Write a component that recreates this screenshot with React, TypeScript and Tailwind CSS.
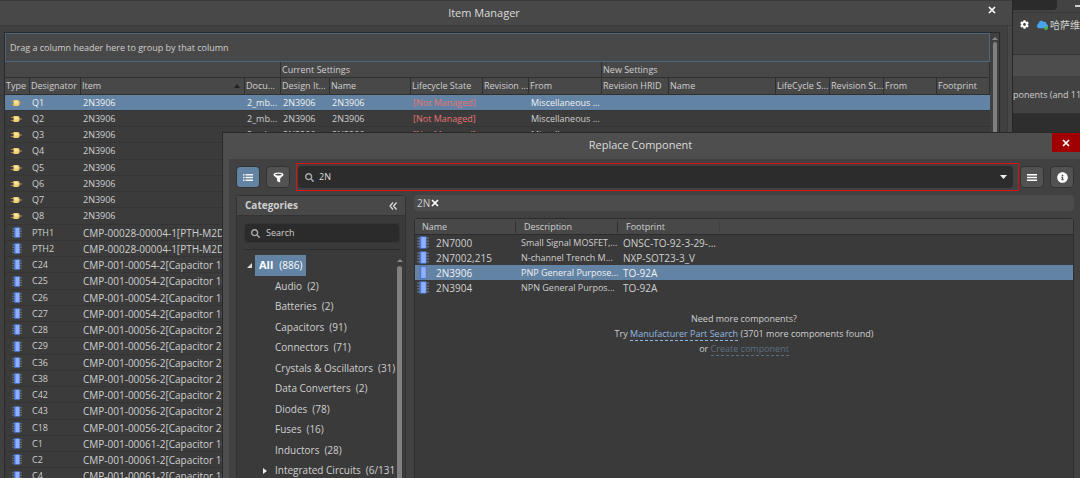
import React from "react";
import { FaCloud, FaCog, FaInfoCircle, FaSearch } from "react-icons/fa";

type Part = {
  designator: string;
  item: string;
  kind: "gate" | "chip";
};

const transistor = (designator: string): Part => ({ designator, item: "2N3906", kind: "gate" });
const chip = (designator: string, item: string): Part => ({ designator, item, kind: "chip" });

const parts: Part[] = [
  ...["Q1", "Q2", "Q3", "Q4", "Q5", "Q6", "Q7", "Q8"].map(transistor),
  chip("PTH1", "CMP-00028-00004-1[PTH-M2DS"),
  chip("PTH2", "CMP-00028-00004-1[PTH-M2DS"),
  ...["C24", "C25", "C26", "C27"].map((d) => chip(d, "CMP-001-00054-2[Capacitor 100")),
  ...["C28", "C29", "C36", "C38", "C42", "C43", "C18"].map((d) =>
    chip(d, "CMP-001-00056-2[Capacitor 2,2")
  ),
  ...["C1", "C2", "C4"].map((d) => chip(d, "CMP-001-00061-2[Capacitor 100")),
];

const columns = [
  { label: "Type", width: "w-[25px]" },
  { label: "Designator", width: "w-[51px]" },
  { label: "Item", width: "w-[164px]", sorted: true },
  { label: "Docu...", width: "w-[36px]" },
  { label: "Design It...", width: "w-[49px]" },
  { label: "Name", width: "w-[81px]" },
  { label: "Lifecycle State", width: "w-[72px]" },
  { label: "Revision ...", width: "w-[46px]" },
  { label: "From", width: "w-[73px]" },
  { label: "Revision HRID", width: "w-[67px]" },
  { label: "Name", width: "w-[107px]" },
  { label: "LifeCycle S...", width: "w-[54px]" },
  { label: "Revision St...", width: "w-[54px]" },
  { label: "From", width: "w-[53px]" },
  { label: "Footprint", width: "w-auto" },
];

const categories = [
  { name: "Audio", count: "(2)" },
  { name: "Batteries", count: "(2)" },
  { name: "Capacitors", count: "(91)" },
  { name: "Connectors", count: "(71)" },
  { name: "Crystals & Oscillators", count: "(31)" },
  { name: "Data Converters", count: "(2)" },
  { name: "Diodes", count: "(78)" },
  { name: "Fuses", count: "(16)" },
  { name: "Inductors", count: "(28)" },
  { name: "Integrated Circuits", count: "(6/131", expandable: true },
];

const results = [
  { name: "2N7000", description: "Small Signal MOSFET,...", footprint: "ONSC-TO-92-3-29-..." },
  { name: "2N7002,215", description: "N-channel Trench M...", footprint: "NXP-SOT23-3_V" },
  { name: "2N3906", description: "PNP General Purpose...", footprint: "TO-92A", selected: true },
  { name: "2N3904", description: "NPN General Purpos...", footprint: "TO-92A" },
];

function CrossIcon() {
  return (
    <svg viewBox="0 0 8 8" className="h-2 w-2" aria-hidden="true">
      <path d="M1 1l6 6M7 1L1 7" stroke="#fff" strokeWidth="1.700" />
    </svg>
  );
}

function GateIcon() {
  return (
    <svg viewBox="0 0 11 8" className="block h-2 w-[11px]" aria-hidden="true">
      <path d="M0 2.500h3M0 5.500h3M8 4h3" stroke="#a88d55" strokeWidth="1" />
      <path d="M2.500 1H7l1.500 1.200v3.600L7 7H2.500z" fill="#f0cf72" />
      <path d="M3.500 2h3v2.500h-3z" fill="#ffe9a0" />
    </svg>
  );
}

function ChipIcon({ large = false }: { large?: boolean }) {
  return (
    <svg
      viewBox="0 0 12 12"
      preserveAspectRatio="none"
      className={large ? "block h-[13px] w-3" : "block h-[11px] w-2.5"}
      aria-hidden="true"
    >
      <path d="M0 2h12M0 4.700h12M0 7.300h12M0 10h12" stroke="#7f838c" strokeWidth=".9" />
      <rect x="2.500" y=".3" width="7" height="11.400" fill="#4a78d8" />
      <rect x="4.200" y="1" width="4.600" height="10" fill="#8fb0ff" />
    </svg>
  );
}

function ItemManager() {
  return (
    <section className="flex min-w-0 flex-1 flex-col border-r border-[#262626] bg-[#484848]">
      <header className="flex h-[26px] shrink-0 items-center border-t border-b border-[#3a3a3a]">
        <h1 className="flex-1 pr-[18px] text-center text-[11px] text-[#dcdcdc]">Item Manager</h1>
        <button aria-label="Close Item Manager" className="mr-3.5 mb-1.5 flex h-3 w-3 items-center justify-center">
          <CrossIcon />
        </button>
      </header>
      <div className="mr-1 flex min-h-0 flex-1 border-r border-[#3a3a3a] bg-[#404040] pt-1.5 pr-[7px] pl-1">
        <div className="flex min-w-0 flex-1 overflow-hidden border-t border-r border-l border-[#2a2a2a]">
          <div className="min-w-0 flex-1">
            <div className="flex h-[29px] items-center border border-[#4f677e] bg-[#484848] pl-1 text-[9px]">
              Drag a column header here to group by that column
            </div>
            <table className="w-full table-fixed border-separate border-spacing-0 text-left">
              <colgroup>
                {columns.map((c, i) => (
                  <col key={i} className={c.width} />
                ))}
              </colgroup>
              <thead className="bg-[#484848] text-[9px] whitespace-nowrap [&_th]:border-r [&_th]:border-b [&_th]:border-[#303030] [&_th]:py-0 [&_th]:pr-0 [&_th]:font-normal">
                <tr className="h-4">
                  <th colSpan={4} />
                  <th colSpan={5} className="pl-px">Current Settings</th>
                  <th colSpan={6} className="pl-px">New Settings</th>
                </tr>
                <tr className="h-[17px]">
                  {columns.map((c, i) => (
                    <th key={i} className="pl-px">
                      <div className="flex items-center justify-between">
                        {c.label}
                        {c.sorted && (
                          <svg viewBox="0 0 6 4" className="mr-1 h-1 w-1.5" aria-label="Sorted ascending">
                            <path d="M0 4l3-4 3 4z" fill="#222" />
                          </svg>
                        )}
                      </div>
                    </th>
                  ))}
                </tr>
              </thead>
              <tbody className="bg-[#3b3b3b] text-[9px] leading-3 whitespace-nowrap [&_td]:border-b [&_td]:border-[#353535] [&_td]:py-0 [&_td]:pr-0 [&_td]:pl-0.5 [&>tr]:h-4 [&>tr:nth-child(4n)]:h-[17px]">
                {parts.map((p, i) => (
                  <tr key={p.designator} className={i === 0 ? "bg-[#6283a3] text-[#f0f0f0]" : ""}>
                    <td>
                      <div className="flex justify-center pr-1">{p.kind === "gate" ? <GateIcon /> : <ChipIcon />}</div>
                    </td>
                    <td>{p.designator}</td>
                    <td className={p.kind === "chip" ? "text-[10px]" : ""}>{p.item}</td>
                    <td>{i < 3 ? "2_mb..." : ""}</td>
                    <td>{i < 3 ? "2N3906" : ""}</td>
                    <td>{i < 3 ? "2N3906" : ""}</td>
                    <td className="text-[#e87474]">{i < 3 ? "[Not Managed]" : ""}</td>
                    <td />
                    <td>{i < 3 ? "Miscellaneous ..." : ""}</td>
                    <td colSpan={6} />
                  </tr>
                ))}
              </tbody>
            </table>
          </div>
          <div className="flex w-[9px] shrink-0 flex-col items-center gap-0.5 bg-[#404040] pt-1">
            <svg viewBox="0 0 6 3" className="h-[3px] w-1.5" aria-hidden="true">
              <path d="M0 3l3-3 3 3z" fill="#888" />
            </svg>
            <div className="w-1 flex-1 rounded-t bg-[#808080]" />
          </div>
        </div>
      </div>
    </section>
  );
}

function AppStrip() {
  return (
    <aside className="flex w-[67px] shrink-0 flex-col overflow-hidden bg-[#2e2e2e] whitespace-nowrap">
      <div className="flex h-[13px] justify-between border-b border-[#383838] bg-[#434343]">
        <div className="h-2.5 w-11 rounded-br-sm bg-[#2b2b2b]" />
        <div className="mt-[5px] h-0.5 w-[5px] bg-[#cfcfcf]" />
      </div>
      <div className="flex h-[42px] items-start border-b border-[#353535] bg-[#424242] pt-1 pl-[7px]">
        <button aria-label="Settings" className="mt-[3px] text-[9px] text-white">
          <FaCog />
        </button>
        <div className="mt-0.5 ml-[5px] h-3 w-px bg-[#2d2d2d]" />
        <div className="relative mt-0.5 ml-[3px] text-[11px] text-[#4aa3f0]">
          <FaCloud />
          <span className="absolute right-0 bottom-0 h-1 w-1 rounded-full bg-[#4caf50]" />
        </div>
        <span className="ml-0.5 text-[10px] leading-4">哈萨维</span>
      </div>
      <div className="h-[21px] bg-[#4d4d4d]" />
      <div className="flex h-[38px] items-center border-b border-[#333] bg-[#424242] text-[9px]">ponents (and 11</div>
    </aside>
  );
}

const toolButton =
  "flex h-[22px] w-6 shrink-0 items-center justify-center rounded-sm border border-[#333] text-white";

function Categories() {
  return (
    <section className="flex w-[170px] shrink-0 flex-col rounded-t border-t border-r border-l border-[#333] bg-[#3a3a3a]">
      <header className="flex h-5 shrink-0 items-center justify-between border-b border-[#333] bg-[#484848] pr-2 pl-2">
        <h2 className="text-[10px] font-bold">Categories</h2>
        <button aria-label="Collapse categories">
          <svg viewBox="0 0 8 8" className="h-2 w-2" fill="none" stroke="#e0e0e0" strokeWidth="1.200">
            <path d="M4 .5L1 4l3 3.500M7.500 .5l-3 3.500 3 3.500" />
          </svg>
        </button>
      </header>
      <label className="mt-[7px] mr-[5px] ml-[7px] flex h-5 shrink-0 items-center gap-1.5 rounded-sm border border-[#343434] bg-[#2b2b2b] pl-1.5">
        <FaSearch className="h-[9px] w-[9px] shrink-0 text-[#aaa]" />
        <input
          aria-label="Search categories"
          placeholder="Search"
          className="w-full min-w-0 bg-transparent text-[9px] outline-none placeholder:text-[#d0d0d0]"
        />
      </label>
      <hr className="mt-1.5 mr-[5px] ml-[7px] shrink-0 border-[#2d2d2d]" />
      <div className="mt-[5px] flex min-h-0 flex-1 overflow-hidden">
        <ul className="min-w-0 flex-1 text-[10px] whitespace-nowrap [&>li]:flex [&>li]:h-5 [&>li]:items-center [&>li:nth-child(odd)]:h-[21px]">
          <li className="pl-2.5">
            <svg viewBox="0 0 5 5" className="h-[5px] w-[5px]" aria-hidden="true">
              <path d="M5 0v5H0z" fill="#ddd" />
            </svg>
            <button className="ml-[3px] flex h-full items-center gap-1.5 bg-[#6283a3] px-1 text-white">
              <b className="text-[11px]">All</b>
              <span>(886)</span>
            </button>
          </li>
          {categories.map((c) => (
            <li key={c.name} className="pl-[26px]">
              <span className="w-3 shrink-0">
                {c.expandable && (
                  <svg viewBox="0 0 4 6" className="h-1.5 w-1" aria-hidden="true">
                    <path d="M0 0l4 3-4 3z" fill="#eee" />
                  </svg>
                )}
              </span>
              <span>{c.name}</span>
              <span className="ml-[5px]">{c.count}</span>
            </li>
          ))}
        </ul>
        <div className="flex w-2 shrink-0 flex-col items-start gap-1 pt-1">
          <svg viewBox="0 0 6 3" className="h-[3px] w-1.5" aria-hidden="true">
            <path d="M0 3l3-3 3 3z" fill="#888" />
          </svg>
          <div className="w-[5px] flex-1 rounded-t bg-[#808080]" />
        </div>
      </div>
    </section>
  );
}

function Results() {
  return (
    <section className="flex min-w-0 flex-1 flex-col">
      <div className="flex h-4 shrink-0 items-center rounded bg-[#4c4c4c] pl-[3px] text-[10px]">
        2N
        <button aria-label="Remove filter 2N" className="ml-px">
          <CrossIcon />
        </button>
      </div>
      <div className="mt-[7px] flex-1 rounded-t border-t border-r border-l border-[#2d2d2d] bg-[#3a3a3a]">
        <table className="w-full table-fixed border-separate border-spacing-0 text-left text-[9px] leading-3 whitespace-nowrap">
          <colgroup>
            <col className="w-[101px]" />
            <col className="w-[102px]" />
            <col className="w-[102px]" />
            <col />
          </colgroup>
          <thead className="bg-[#484848] [&_th]:border-b [&_th]:border-[#2d2d2d] [&_th]:p-0 [&_th]:font-normal">
            <tr className="h-4">
              <th><div className="border-r border-[#303030] pl-[7px]">Name</div></th>
              <th><div className="border-r border-[#303030] pl-2">Description</div></th>
              <th><div className="border-r border-[#414141] pl-2">Footprint</div></th>
              <th aria-label="Spare" />
            </tr>
          </thead>
          <tbody className="[&_td]:p-0">
            {results.map((r) => (
              <tr key={r.name} className={r.selected ? "h-[15px] bg-[#6283a3] text-[#f0f0f0]" : "h-[15px]"}>
                <td>
                  <div className="flex items-center gap-[7px] pl-0.5 text-[10px]">
                    <ChipIcon large />
                    {r.name}
                  </div>
                </td>
                <td><div className="pl-[5px]">{r.description}</div></td>
                <td><div className="pl-[5px] text-[10px]">{r.footprint}</div></td>
                <td />
              </tr>
            ))}
          </tbody>
        </table>
        <div className="mt-4 text-center text-[9px] leading-[15px]">
          <p>Need more components?</p>
          <p>
            Try{" "}
            <a href="#search" className="border-b border-dashed border-[#8fb8e0] text-[#8fb8e0]">Manufacturer Part Search</a>{" "}
            (3701 more components found)
          </p>
          <p>
            or <a href="#create" className="border-b border-dashed border-[#5d6f80] text-[#5d6f80]">Create component</a>
          </p>
        </div>
      </div>
    </section>
  );
}

function ReplaceDialog() {
  return (
    <div
      role="dialog"
      aria-label="Replace Component"
      className="absolute top-[132px] right-0 bottom-0 left-[222px] flex flex-col border-t border-l border-[#292929] bg-[#4e4e4e]"
    >
      <header className="flex h-[26px] shrink-0 items-start">
        <h2 className="flex-1 self-center pb-0.5 pl-1.5 text-center text-[11px] text-[#dcdcdc]">Replace Component</h2>
        <button aria-label="Close" className="flex h-[19px] w-7 items-center justify-center bg-[#a00000]">
          <CrossIcon />
        </button>
      </header>
      <div className="ml-1.5 flex min-h-0 flex-1 flex-col bg-[#414141] pt-1 pr-1.5 pl-[7px]">
        <div className="flex shrink-0 items-center">
          <button aria-label="List view" className={`${toolButton} bg-[#6283a3]`}>
            <svg viewBox="0 0 10 7" className="h-[7px] w-2.5" fill="#f4f4f4">
              <path d="M0 0h1.500v1.500H0zM2.500 0H10v1.500H2.500zM0 2.750h1.500v1.500H0zM2.500 2.750H10v1.500H2.500zM0 5.500h1.500V7H0zM2.500 5.500H10V7H2.500z" />
            </svg>
          </button>
          <button aria-label="Filter" className={`${toolButton} ml-1.5 bg-[#525252]`}>
            <svg viewBox="0 0 12 12" className="h-[11px] w-[11px]" fill="#fff">
              <path fillRule="evenodd" d="M.5 3C.5 1.200 3 .5 6 .5s5.500 .7 5.500 2.500c0 1-2 2-3.700 4v4.500L4.500 10V7C2.500 5 .5 4 .5 3zM2.200 2.800C3 4.200 9 4.200 9.800 2.800 9 1.600 3 1.600 2.200 2.800z" />
            </svg>
          </button>
          <div className="ml-1.5 flex min-w-0 flex-1 border border-[#e00f0f] py-0.5 pr-[5px] pl-px">
            <label className="flex h-[22px] min-w-0 flex-1 items-center gap-[5px] rounded-sm bg-[#2c2c2c] pr-1.5 pl-[7px]">
              <FaSearch className="h-[9px] w-[9px] shrink-0 text-[#aaa]" />
              <input
                aria-label="Search components"
                defaultValue="2N"
                className="w-full min-w-0 bg-transparent text-[9px] text-[#dcdcdc] outline-none"
              />
              <svg viewBox="0 0 7 4" className="h-1 w-[7px] shrink-0" aria-hidden="true">
                <path d="M0 0h7L3.500 4z" fill="#eee" />
              </svg>
            </label>
          </div>
          <button aria-label="Menu" className={`${toolButton} ml-px bg-[#525252]`}>
            <svg viewBox="0 0 10 7" className="h-[7px] w-2.5" fill="#fff">
              <path d="M0 0h10v1.600H0zM0 2.700h10v1.600H0zM0 5.400h10V7H0z" />
            </svg>
          </button>
          <button aria-label="Information" className={`${toolButton} ml-1.5 bg-[#525252] text-[11px]`}>
            <FaInfoCircle />
          </button>
        </div>
        <div className="mt-1 flex min-h-0 flex-1 gap-2">
          <Categories />
          <Results />
        </div>
      </div>
    </div>
  );
}

export default function App() {
  return (
    <main className="relative flex h-screen overflow-hidden bg-[#2e2e2e] font-['Open_Sans','Noto_Sans_CJK_SC',sans-serif] text-[#cfcfcf]">
      <ItemManager />
      <AppStrip />
      <ReplaceDialog />
    </main>
  );
}
